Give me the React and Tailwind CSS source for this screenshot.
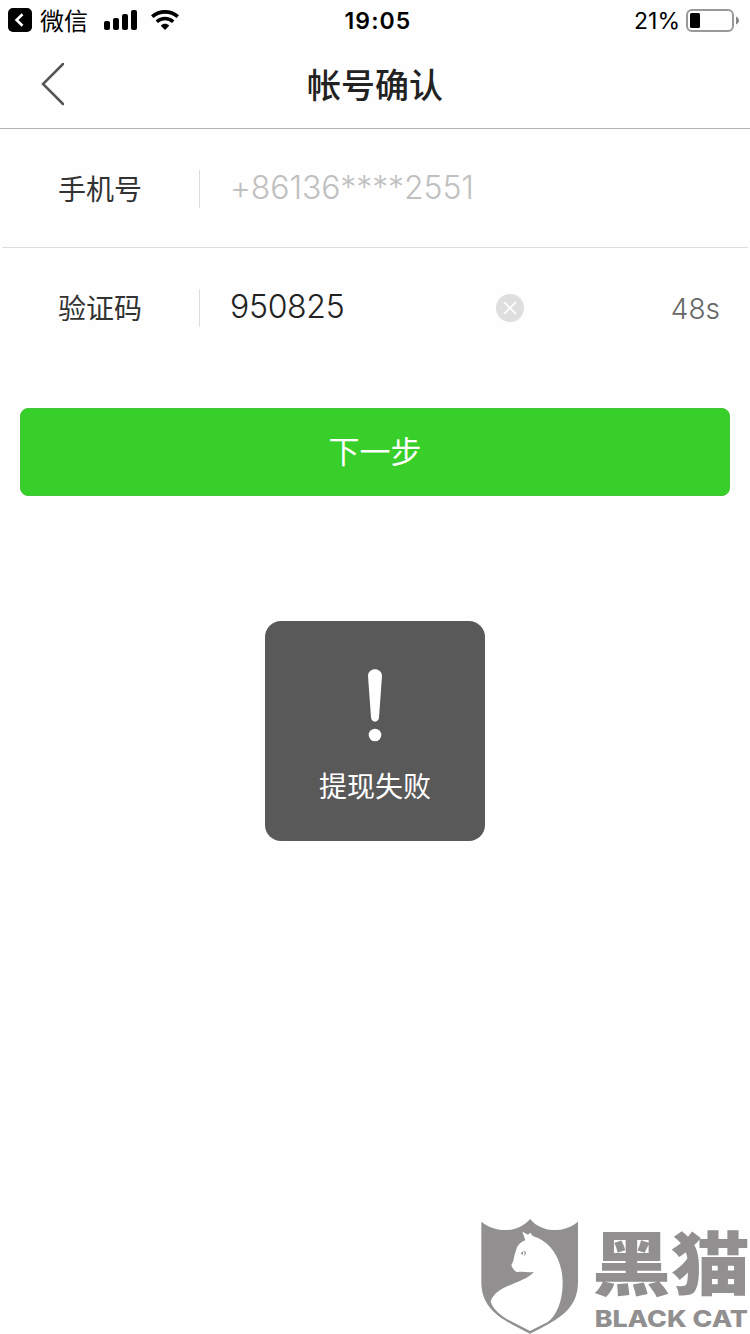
import clsx from "clsx";

const SIGNAL_BARS = [
  { x: 0, height: 9 },
  { x: 9, height: 12 },
  { x: 18, height: 16 },
  { x: 27, height: 20 },
];

function StatusBar() {
  return (
    <div className="grid h-10 grid-cols-3 items-center pl-2 pr-2.5 text-black">
      <div className="flex items-center">
        <svg className="size-6" viewBox="0 0 24 24">
          <rect width="24" height="24" rx="5" />
          <path d="M14.5 6.3 8.6 12l5.9 5.7" fill="none" stroke="#fff" strokeWidth="2.6" />
        </svg>
        <span className="ml-2 pt-1 text-2xl leading-9">微信</span>
        <svg className="ml-4 h-5 w-[33px]" viewBox="0 0 33 20">
          {SIGNAL_BARS.map((bar) => (
            <rect key={bar.x} x={bar.x} y={20 - bar.height} width="6" height={bar.height} rx="2" />
          ))}
        </svg>
        <svg className="ml-3.5 h-5 w-7" viewBox="0 0 28 20">
          <path d="M1.200 6.600C8.500 0.300 19.500 0.300 26.800 6.600" fill="none" stroke="#000" strokeWidth="3.700" />
          <path d="M5.800 11.700C10.500 7.500 17.500 7.500 22.200 11.700" fill="none" stroke="#000" strokeWidth="3.500" />
          <path d="M9.800 15.800C12.200 13.200 15.800 13.200 18.200 15.800L14 20Z" />
        </svg>
      </div>
      <div className="pl-2 pt-0.5 text-center text-[23px] font-semibold tracking-[1.1px]">19:05</div>
      <div className="flex items-center justify-end">
        <span className="pt-0.5 text-[23px]">21%</span>
        <svg className="ml-1.5 h-6 w-[54px]" viewBox="0 0 54 24">
          <rect x="1" y="2" width="46" height="21" rx="5" fill="none" stroke="#999" strokeWidth="2" />
          <rect x="4" y="5" width="10" height="15" rx="1.500" />
          <path d="M50 8.500c4 1.500 4 6.500 0 8z" fill="#888" />
        </svg>
      </div>
    </div>
  );
}

function NavBar() {
  return (
    <div className="grid h-[89px] grid-cols-[80px_1fr_80px] items-center border-b border-[#b2b2b2]">
      <svg className="ml-10 h-11 w-6" viewBox="0 0 24 44" fill="none" stroke="#555" strokeWidth="2.500">
        <path d="M23 2 3 22 23 42" strokeLinecap="round" />
      </svg>
      <h1 className="pt-[3px] text-center text-[34px] font-medium leading-none text-[#222]">帐号确认</h1>
    </div>
  );
}

function Field({ label, value, muted, children }) {
  return (
    <div className="flex h-[119px] items-center pl-[58px] pr-[30px]">
      <span className="w-[141px] pt-[3px] text-[28px] text-[#333]">{label}</span>
      <span className="h-[38px] w-px bg-[#ddd]" />
      <span
        className={clsx(
          "ml-[30px] pb-0.5 text-[32px] font-light",
          muted ? "text-[#c0c0c0] tracking-[-0.1px]" : "text-[#222] tracking-[-0.3px]"
        )}
      >
        {value}
      </span>
      {children}
    </div>
  );
}

function ClearIcon() {
  return (
    <svg className="size-7" viewBox="0 0 28 28">
      <circle cx="14" cy="14" r="14" fill="#dedede" />
      <path d="m8 8 12 12M20 8 8 20" stroke="#fff" strokeWidth="1.700" />
    </svg>
  );
}

function Toast({ text }) {
  return (
    <div className="mx-auto mt-[125px] flex size-[220px] flex-col items-center rounded-2xl bg-[#595959] pt-12 text-white">
      <svg className="h-[73px] w-4" viewBox="0 0 16 73" fill="#fff">
        <path d="M1 7C1-2 15-2 15 7L12 48.500C11.700 54 4.300 54 4 48.500Z" />
        <circle cx="8" cy="66" r="6.300" />
      </svg>
      <span className="mt-[25px] text-[28px] leading-10">{text}</span>
    </div>
  );
}

function BlackCatLogo() {
  return (
    <svg
      className="absolute bottom-0 right-0 h-[116px] w-[270px]"
      viewBox="30 39 810 348"
      fill="#918f90"
    >
      <path d="M34 50C80 86 145 84 180 42C215 84 280 86 324 50V230C324 315 262 345 180 386C98 345 34 315 34 230Z" />
      {/* cat silhouette */}
      <path
        fill="#fff"
        d="M157 80 174 89 181 83 188 93C240 108 278 160 278 235C278 290 258 335 232 352L180 378 122 348C95 334 70 315 62 290C75 240 165 235 192 200C175 204 154 198 142 202C134 199 126 188 124 180C134 165 130 155 137 140C142 120 150 112 166 106Z"
      />
      <path d="M152 145 160 138 158 150ZM161 137C169 138 171 148 161 153C165 148 165 143 161 137Z" />
      <text
        transform="translate(366 254) scale(1.03 .9)"
        fontSize="230"
        fontWeight="900"
        textLength="460"
      >
        黑猫
      </text>
      <text
        x="374"
        y="366"
        fontSize="69"
        fontWeight="800"
        textLength="460"
        lengthAdjust="spacingAndGlyphs"
      >
        BLACK CAT
      </text>
    </svg>
  );
}

export default function App() {
  return (
    <div className="relative h-[1334px] w-[750px] overflow-hidden bg-[#fefefe] font-['Inter','Noto_Sans_CJK_SC',sans-serif]">
      <StatusBar />
      <NavBar />
      <Field label="手机号" value="+86136****2551" muted />
      <div className="mx-0.5 -mt-px h-px bg-[#ddd]" />
      <Field label="验证码" value="950825">
        <div className="ml-auto flex items-center">
          <ClearIcon />
          <span className="w-[196px] pt-0.5 text-right text-[28px] font-light text-[#666]">48s</span>
        </div>
      </Field>
      <button className="mx-5 mt-[41px] block h-[88px] w-[710px] rounded-lg border border-[#42c637] bg-[#39cf2b] text-[31px] text-white">
        下一步
      </button>
      <Toast text="提现失败" />
      <BlackCatLogo />
    </div>
  );
}
